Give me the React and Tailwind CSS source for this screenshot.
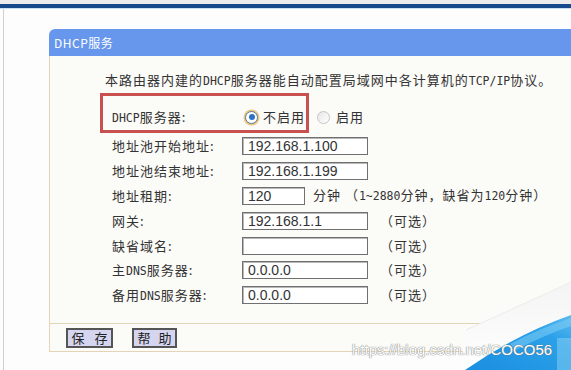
import React from "react";

function H({ children }) {
  return (
    <span className="font-['DejaVu_Sans_Mono',monospace] text-[11.5px] tracking-[0px]">
      {children}
    </span>
  );
}

function Input({ value, w = "w-[126px]" }) {
  return (
    <div
      className={`${w} shrink-0 h-[18px] bg-white border border-[#707070] shadow-[inset_1px_1px_0_#b8b8b8] flex items-center pl-[5px] font-['Liberation_Sans',sans-serif] text-[14px] text-[#333] tracking-normal leading-none`}
    >
      {value}
    </div>
  );
}

function Optional() {
  return <span className="ml-[12px] shrink-0 whitespace-nowrap">（可选）</span>;
}

function Radio({ checked }) {
  if (checked) {
    return (
      <span className="shrink-0 w-[13px] h-[13px] rounded-full border border-[#4f7cad] bg-white shadow-[0_0_0_1.5px_#efc77c] flex items-center justify-center">
        <span className="w-[6px] h-[6px] rounded-full bg-[#2f73c4]" />
      </span>
    );
  }
  return (
    <span className="shrink-0 w-[13px] h-[13px] rounded-full border border-[#c4c4c4] bg-gradient-to-br from-[#e6e6e6] to-white" />
  );
}

function Row({ label, children }) {
  return (
    <div className="flex items-center h-[24.8px] whitespace-nowrap">
      <div className="w-[130px] shrink-0">{label}</div>
      {children}
    </div>
  );
}

export default function App() {
  return (
    <div className="relative w-[571px] h-[370px] overflow-hidden bg-[#fdfdfd] font-['Noto_Sans_CJK_SC',sans-serif] text-[#333]">
      <div className="h-[4px] bg-[#ececec]" />
      <div className="h-[4px] bg-[#184b8c]" />
      <div className="h-[1px] bg-[#c9e2f3]" />
      <div className="flex h-[361px]">
        <div className="w-[3px]" />
        <div className="w-[1px] bg-[#cfcfcf]" />
        <div className="flex-1 pl-[45px] pt-[20px]">
          <div className="flex flex-col">
            <div className="h-[27px] rounded-tl-[6px] bg-[#6797ec] text-white text-[12px] tracking-[0.5px] flex items-center pl-[5px]">
              DHCP服务
            </div>
            <div className="h-[296px] bg-[#fbfbf8] border-l border-b border-[#e2d4b4] flex flex-col text-[13px] leading-[18px] tracking-[1px]">
              <div className="mt-[15px] pl-[55px] whitespace-nowrap">
                本路由器内建的<H>DHCP</H>服务器能自动配置局域网中各计算机的<H>TCP/IP</H>协议。
              </div>
              <div className="mt-[3px] ml-[50px] w-[209px] h-[40px] border-[3px] border-[#c8504e] flex items-start pt-[12px] pl-[9px] whitespace-nowrap">
                <div className="w-[130px] shrink-0">
                  <H>DHCP</H>服务器:
                </div>
                <div className="flex items-center ml-[3px] shrink-0">
                  <Radio checked />
                  <span className="ml-[5px]">不启用</span>
                  <span className="ml-[12px] flex items-center">
                    <Radio />
                  </span>
                  <span className="ml-[6px]">启用</span>
                </div>
              </div>
              <div className="mt-[1px] pl-[62px] flex flex-col">
                <Row label="地址池开始地址:">
                  <Input value="192.168.1.100" />
                </Row>
                <Row label="地址池结束地址:">
                  <Input value="192.168.1.199" />
                </Row>
                <Row label="地址租期:">
                  <Input value="120" w="w-[63px]" />
                  <span className="ml-[8px] whitespace-nowrap">
                    分钟 （<H>1~2880</H>分钟，缺省为<H>120</H>分钟）
                  </span>
                </Row>
                <Row label="网关:">
                  <Input value="192.168.1.1" />
                  <Optional />
                </Row>
                <Row label="缺省域名:">
                  <Input value="" />
                  <Optional />
                </Row>
                <Row
                  label={
                    <>
                      主<H>DNS</H>服务器:
                    </>
                  }
                >
                  <Input value="0.0.0.0" />
                  <Optional />
                </Row>
                <Row
                  label={
                    <>
                      备用<H>DNS</H>服务器:
                    </>
                  }
                >
                  <Input value="0.0.0.0" />
                  <Optional />
                </Row>
              </div>
              <div className="mt-[15px] h-[1px] bg-[#e2d4b4]" />
              <div className="mt-[4px] pl-[16px] flex gap-[19px] tracking-normal">
                <button className="w-[47px] h-[20px] bg-[#d5d5f0] border-2 border-[#555] flex items-center justify-center gap-[10px] text-[13px] text-[#222]">
                  <span>保</span>
                  <span>存</span>
                </button>
                <button className="w-[45px] h-[20px] bg-[#d5d5f0] border-2 border-[#555] flex items-center justify-center gap-[8px] text-[13px] text-[#222]">
                  <span>帮</span>
                  <span>助</span>
                </button>
              </div>
            </div>
          </div>
        </div>
      </div>

      <svg
        className="absolute left-[420px] top-[280px]"
        width="151"
        height="90"
        viewBox="0 0 151 90"
      >
        <defs>
          <linearGradient id="bl" x1="0" y1="1" x2="1" y2="0">
            <stop offset="0" stopColor="#1b8fe0" />
            <stop offset="0.7" stopColor="#2aa0e8" />
            <stop offset="1" stopColor="#5cbcf0" />
          </linearGradient>
          <linearGradient id="wh" x1="0" y1="0" x2="0" y2="1">
            <stop offset="0" stopColor="#f4f4f4" />
            <stop offset="1" stopColor="#ffffff" />
          </linearGradient>
        </defs>
        <path d="M40 90 L46 50 Q95 28 151 2 L151 90 Z" fill="url(#wh)" />
        <path d="M46 50 Q95 28 151 2" fill="none" stroke="#ececec" strokeWidth="1" />
        <path d="M45 90 Q95 55 151 35 L151 90 Z" fill="url(#bl)" />
        <path d="M90 64 Q118 49 151 38 L151 46 Q122 56 96 70 Z" fill="#7fcdf4" opacity="0.55" />
        <rect x="137" y="58" width="14" height="32" fill="#9ad6f6" opacity="0.45" />
      </svg>

      <div className="absolute left-[352px] top-[341px] text-[15px] leading-[18px] font-['Liberation_Sans',sans-serif] text-white [text-shadow:0_0_1px_#7a7a7a,0_0_1px_#7a7a7a]">
        https://blog.csdn.net/COCO56
      </div>
    </div>
  );
}
